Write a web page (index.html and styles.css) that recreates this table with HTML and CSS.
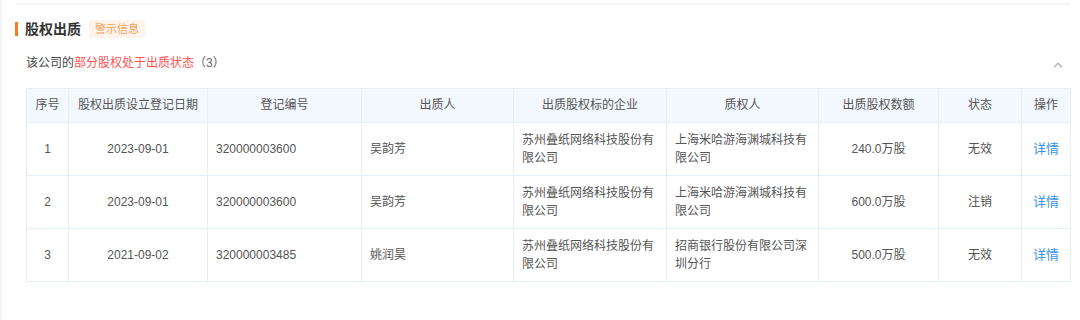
FILE: index.html
```html
<!DOCTYPE html>
<html lang="zh">
<head>
<meta charset="utf-8">
<link rel="stylesheet" href="styles.css">
</head>
<body>
<div class="page">
  <div class="topline"></div>
  <div class="title-row">
    <span class="bar"></span>
    <h2 class="title">股权出质</h2>
    <span class="badge">警示信息</span>
  </div>
  <div class="section">
    <div class="sub-row">
      <p class="subtitle">该公司的<span class="hl">部分股权处于出质状态</span><span class="count">（3）</span></p>
      <svg class="chevron" width="10" height="6" viewBox="0 0 10 6"><path d="M1 5.2 L5 1.2 L9 5.2" fill="none" stroke="#aab2bd" stroke-width="1.3"/></svg>
    </div>
    <table class="grid">
      <colgroup>
        <col style="width:42px"><col style="width:139px"><col style="width:154px"><col style="width:152px"><col style="width:153px"><col style="width:152px"><col style="width:120px"><col style="width:83px"><col style="width:49px">
      </colgroup>
      <thead>
        <tr><th>序号</th><th>股权出质设立登记日期</th><th>登记编号</th><th>出质人</th><th>出质股权标的企业</th><th>质权人</th><th>出质股权数额</th><th>状态</th><th>操作</th></tr>
      </thead>
      <tbody>
        <tr><td class="c">1</td><td class="c">2023-09-01</td><td>320000003600</td><td>吴韵芳</td><td>苏州叠纸网络科技股份有限公司</td><td>上海米哈游海渊城科技有限公司</td><td class="c">240.0万股</td><td class="c">无效</td><td class="c"><a class="link">详情</a></td></tr>
        <tr><td class="c">2</td><td class="c">2023-09-01</td><td>320000003600</td><td>吴韵芳</td><td>苏州叠纸网络科技股份有限公司</td><td>上海米哈游海渊城科技有限公司</td><td class="c">600.0万股</td><td class="c">注销</td><td class="c"><a class="link">详情</a></td></tr>
        <tr><td class="c">3</td><td class="c">2021-09-02</td><td>320000003485</td><td>姚润昊</td><td>苏州叠纸网络科技股份有限公司</td><td>招商银行股份有限公司深圳分行</td><td class="c">500.0万股</td><td class="c">无效</td><td class="c"><a class="link">详情</a></td></tr>
      </tbody>
    </table>
  </div>
</div>
</body>
</html>
```

FILE: styles.css
```css
html, body {
  margin: 0;
  padding: 0;
  background: #fff;
}
body {
  font-family: "Liberation Sans", "Noto Sans CJK SC", sans-serif;
  font-size: 12px;
  color: #333;
}
.page {
  border-left: 2px solid #f2f3f5;
  padding: 3px 10px 0 13px;
  height: 320px;
  box-sizing: border-box;
}
.topline {
  height: 2px;
  margin-left: 1px;
  background: #f3f4f6;
}
.title-row {
  display: flex;
  align-items: center;
  height: 18px;
  margin-top: 15px;
}
.bar {
  width: 3px;
  height: 14px;
  background: #ff7a1a;
  margin-right: 7px;
}
.title {
  margin: 0;
  font-size: 14px;
  font-weight: bold;
  color: #333;
  line-height: 18px;
}
.badge {
  margin-left: 8px;
  height: 18px;
  line-height: 18px;
  padding: 0 6px;
  font-size: 11px;
  color: #f5a15a;
  background: #fff4e9;
  border-radius: 2px;
}
.section {
  padding-left: 11px;
}
.sub-row {
  display: flex;
  align-items: center;
  justify-content: space-between;
  margin-top: 16px;
  height: 18px;
}
.subtitle {
  margin: 0;
  line-height: 18px;
  color: #444;
}
.hl {
  color: #ff5252;
}
.count {
  color: #666;
}
.chevron {
  margin-right: 7px;
  margin-top: 4px;
}
.grid {
  margin-top: 16px;
  border-collapse: collapse;
  table-layout: fixed;
  width: 1044px;
}
.grid th, .grid td {
  border: 1px solid #e6eef6;
  padding: 8px 7px 8px 8px;
  line-height: 18px;
  text-align: left;
  color: #555;
}
.grid th {
  font-weight: normal;
  text-align: center;
  background: #f2f8fe;
  color: #555;
  padding: 7px 4px 8px;
}
.grid td {
  height: 52px;
  box-sizing: border-box;
  padding-top: 8px;
  padding-bottom: 8px;
}
.grid td.c {
  text-align: center;
  padding-left: 4px;
  padding-right: 4px;
}
.link {
  color: #3a93ee;
  font-size: 13px;
}
```
